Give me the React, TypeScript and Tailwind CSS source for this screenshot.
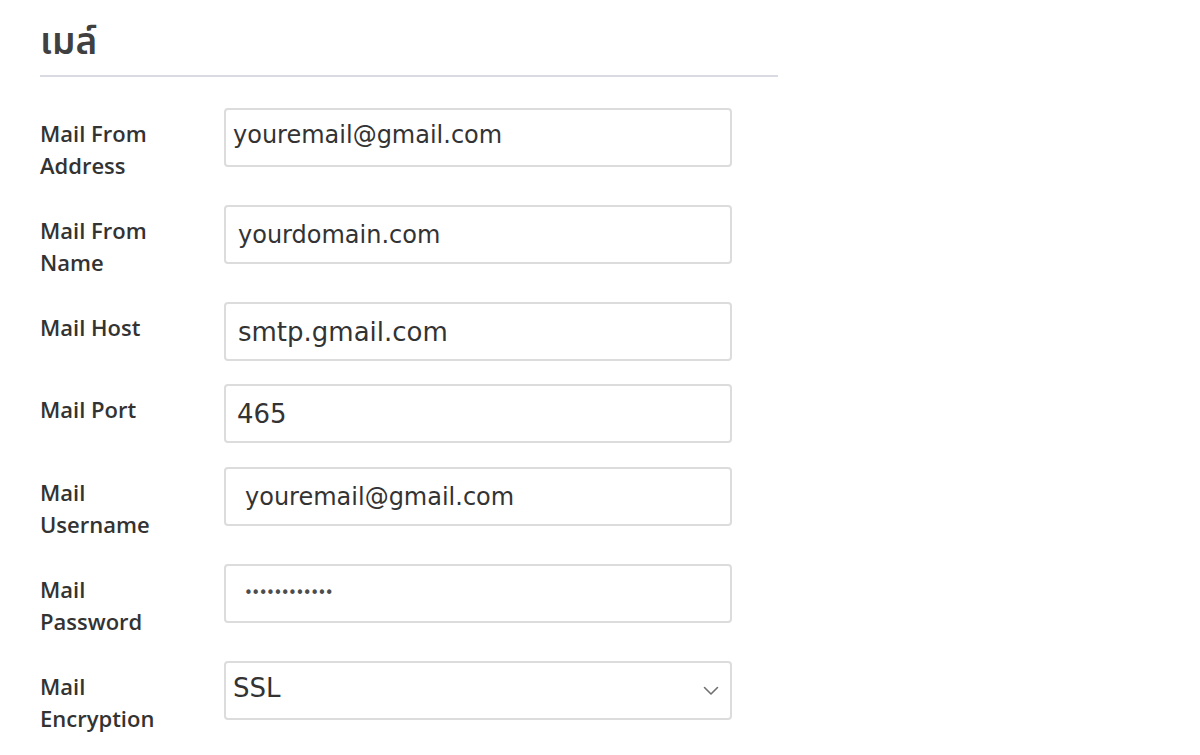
import React from "react";

const rows: { label: string; value: string; cls: string; mb: string; type?: string }[] = [
  { label: "Mail From Address", value: "youremail@gmail.com", cls: "pl-[7px] pb-[6px] text-[24px] text-[#333333]", mb: "mb-[23px]" },
  { label: "Mail From Name", value: "yourdomain.com", cls: "pl-[12px] text-[24px] text-[#333333]", mb: "mb-[23px]" },
  { label: "Mail Host", value: "smtp.gmail.com", cls: "pl-[12px] text-[26px] text-[#333333]", mb: "mb-[23px]" },
  { label: "Mail Port", value: "465", cls: "pl-[11px] text-[26px] text-[#333333]", mb: "mb-[24px]" },
  { label: "Mail Username", value: "youremail@gmail.com", cls: "pl-[19px] text-[24px] text-[#333333]", mb: "mb-[23px]" },
  {
    label: "Mail Password",
    value: "............",
    cls: "pl-[18px] pb-[2px] text-[15px] tracking-[-1.5px] text-[#4d4d4d]",
    mb: "mb-[23px]",
    type: "password",
  },
];

export default function App() {
  return (
    <div className="min-h-[755px] bg-white pl-[40px] pt-[14px] font-['Open_Sans','Noto_Sans_Thai','Noto_Sans',sans-serif]">
      <div className="w-[738px]">
        <h2 className="border-b-2 border-[#d9dae2] pb-[9px] text-[37px] leading-[52px] font-semibold text-[#404040]">
          เมล์
        </h2>
        <form className="pt-[31px]" onSubmit={(e) => e.preventDefault()}>
          {rows.map((r) => (
            <div key={r.label} className={`${r.mb} flex items-start`}>
              <label className="w-[184px] shrink-0 pr-[40px] pt-[9px] pb-[1px] text-[22px] leading-[32px] font-semibold text-[#333333]">
                {r.label}
              </label>
              <input
                type={r.type ?? "text"}
                readOnly
                value={r.value}
                className={`h-[59px] w-[508px] rounded-[4px] border-2 border-[#dcdcdc] bg-white pr-3 font-['DejaVu_Sans',sans-serif] outline-none ${r.cls}`}
              />
            </div>
          ))}
          <div className="mb-[23px] flex items-start">
            <label className="w-[184px] shrink-0 pr-[40px] pt-[9px] pb-[1px] text-[22px] leading-[32px] font-semibold text-[#333333]">
              Mail Encryption
            </label>
            <div className="relative w-[508px]">
              <select
                defaultValue="SSL"
                className="h-[59px] w-full appearance-none rounded-[4px] border-2 border-[#dcdcdc] bg-white pl-[7px] pb-[4px] pr-10 font-['DejaVu_Sans',sans-serif] text-[26px] text-[#333333] outline-none"
              >
                <option value="SSL">SSL</option>
                <option value="TLS">TLS</option>
              </select>
              <svg
                className="pointer-events-none absolute right-[13px] top-[25px]"
                width="16"
                height="10"
                viewBox="0 0 16 10"
                fill="none"
              >
                <path d="M1.5 1.5 L8 8 L14.5 1.5" stroke="#707070" strokeWidth="1.6" strokeLinecap="round" strokeLinejoin="round" />
              </svg>
            </div>
          </div>
        </form>
      </div>
    </div>
  );
}
